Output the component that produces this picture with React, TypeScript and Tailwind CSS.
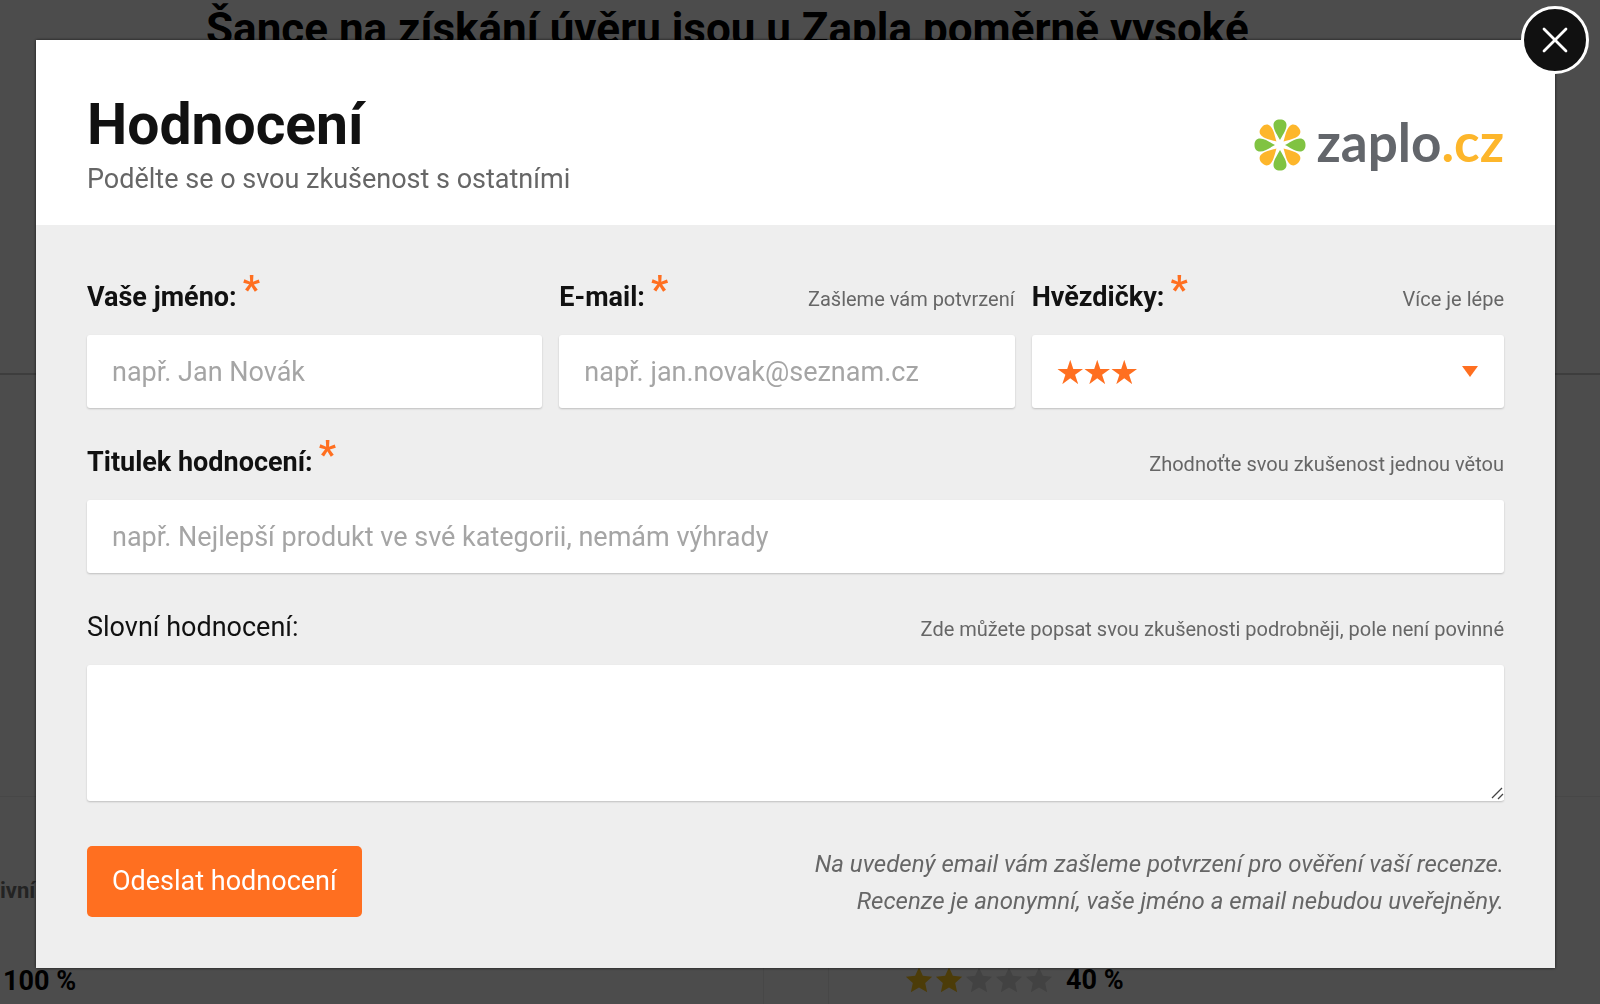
import type { ReactNode } from "react";
import { X } from "lucide-react";

const petals = [0, 45, 90, 135, 180, 225, 270, 315];

const starPath = "M12 1l3.3 7.4 8 .8-6 5.4 1.7 7.9-7-4.1-7 4.1 1.7-7.9-6-5.4 8-.8z";

const Logo = () => (
  <div className="flex items-center gap-[10px]">
    <svg viewBox="-27 -26 54 52" className="w-[54px] h-[52px]" aria-hidden="true">
      {petals.map((angle, i) => (
        <path
          key={angle}
          d="M0 -5 C-2 -9 -6.5 -15 -6.5 -20 C-6.5 -23.5 -4 -25.5 0 -25.5 C4 -25.5 6.5 -23.5 6.5 -20 C6.5 -15 2 -9 0 -5 Z"
          fill={i % 2 === 0 ? "#80c342" : "#fdb62b"}
          transform={`rotate(${angle})`}
        />
      ))}
    </svg>
    <span className="pb-[6px] font-['Lato',sans-serif] font-bold text-[53px] leading-[60px] text-[#63666b]">
      zaplo<span className="text-[#fdb62b]">.cz</span>
    </span>
  </div>
);

type FieldProps = {
  id: string;
  label: string;
  hint?: string;
  required?: boolean;
  className?: string;
  children: ReactNode;
};

const Field = ({ id, label, hint, required, className = "", children }: FieldProps) => (
  <div className={`mb-[33px] ${className}`}>
    <div className="flex items-baseline justify-between h-10 mb-[18px] pt-px leading-10 whitespace-nowrap box-content">
      <label htmlFor={id} className={`text-[27px] ${required ? "font-bold" : ""}`}>
        {label}
        {required && <span className="ml-[6px] text-[38px] leading-[0] align-[3px] text-[#ff6f20]">*</span>}
      </label>
      {hint && <span className="text-[20px] text-[#666]">{hint}</span>}
    </div>
    {children}
  </div>
);

const inputClass =
  "block w-full h-[73px] px-[25px] rounded-[3px] bg-white text-[27px] placeholder:text-[#a5a5a5] shadow-[0_1px_2px_rgba(0,0,0,0.2)] outline-none";

const Rating = ({ value }: { value: number }) => (
  <div className="flex gap-[2px]">
    {[1, 2, 3, 4, 5].map((n) => (
      <svg key={n} viewBox="0 0 24 24" className={`size-7 ${n <= value ? "text-[#ffc820]" : "text-[#ddd]"}`}>
        <path d={starPath} fill="currentColor" />
      </svg>
    ))}
  </div>
);

/* Review page under the dialog */
const ReviewPage = () => (
  <div className="h-screen flex flex-col overflow-hidden bg-white text-black" aria-hidden="true">
    <div className="h-[375px] shrink-0 pt-1 pl-[206px] border-b-2 border-[#ccc]">
      <h2 className="text-[44px] leading-[50px] font-bold whitespace-nowrap">
        Šance na získání úvěru jsou u Zapla poměrně vysoké
      </h2>
    </div>
    <div className="h-[422px] shrink-0 border-b border-[#eee]" />
    <div className="grow grid grid-cols-[764px_1fr]">
      <div className="border-r border-[#eee] pt-[78px]">
        <p className="text-[22px] leading-8 font-bold text-[#777]">ivní</p>
        <p className="mt-[58px] pl-[3px] text-[27px] leading-8 font-bold">100 %</p>
      </div>
      <div className="ml-16 border-l border-[#eee] pt-[167px] pl-[76px]">
        <div className="flex items-center gap-[13px]">
          <Rating value={2} />
          <span className="text-[27px] leading-8 font-bold">40 %</span>
        </div>
      </div>
    </div>
  </div>
);

const ReviewDialog = () => (
  <div className="fixed inset-0 bg-black/70 pt-10 pl-9 pr-[45px]">
    <div
      role="dialog"
      aria-labelledby="dialog-title"
      className="relative bg-[#eee] shadow-[0_0_3px_rgba(0,0,0,0.7)]"
    >
      <button
        type="button"
        aria-label="Zavřít"
        className="absolute -top-[34px] -right-[34px] size-[68px] rounded-full border-[3px] border-white bg-[#111] text-white flex items-center justify-center"
      >
        <X size={44} strokeWidth={1.5} />
      </button>

      <header className="flex items-center justify-between bg-white px-[51px] pt-[50px] pb-[26px]">
        <div>
          <h1 id="dialog-title" className="text-[57px] leading-[70px] font-bold text-[#111]">
            Hodnocení
          </h1>
          <p className="text-[27px] leading-[39px] text-[#666]">Podělte se o svou zkušenost s ostatními</p>
        </div>
        <Logo />
      </header>

      <form className="px-[51px] pt-[51px] pb-12 text-[#111]">
        <div className="grid grid-cols-3">
          <Field id="name" label="Vaše jméno:" required className="pr-[17px]">
            <input id="name" type="text" placeholder="např. Jan Novák" className={inputClass} />
          </Field>
          <Field id="email" label="E-mail:" hint="Zašleme vám potvrzení" required className="pr-[17px]">
            <input id="email" type="email" placeholder="např. jan.novak@seznam.cz" className={inputClass} />
          </Field>
          <Field id="stars" label="Hvězdičky:" hint="Více je lépe" required>
            <div className="relative">
              <select
                id="stars"
                defaultValue="3"
                className="block w-full h-[73px] px-[25px] rounded-[3px] bg-white font-['Noto_Sans_CJK_JP',sans-serif] text-[27px] text-[#ff6f20] shadow-[0_1px_2px_rgba(0,0,0,0.2)] outline-none appearance-none"
              >
                <option value="5">★★★★★</option>
                <option value="4">★★★★</option>
                <option value="3">★★★</option>
                <option value="2">★★</option>
                <option value="1">★</option>
              </select>
              <svg
                viewBox="0 0 16 11"
                className="absolute right-[26px] top-[31px] w-4 h-[11px] pointer-events-none"
                aria-hidden="true"
              >
                <path d="M0 0h16l-8 11z" fill="#ff6f20" />
              </svg>
            </div>
          </Field>
        </div>

        <Field id="title" label="Titulek hodnocení:" hint="Zhodnoťte svou zkušenost jednou větou" required>
          <input
            id="title"
            type="text"
            placeholder="např. Nejlepší produkt ve své kategorii, nemám výhrady"
            className={inputClass}
          />
        </Field>

        <Field
          id="review"
          label="Slovní hodnocení:"
          hint="Zde můžete popsat svou zkušenosti podrobněji, pole není povinné"
        >
          <div className="relative">
            <textarea
              id="review"
              className="block w-full h-[136px] px-[25px] py-4 rounded-[3px] bg-white text-[27px] shadow-[0_1px_2px_rgba(0,0,0,0.2)] outline-none resize-y"
            />
            <svg
              viewBox="0 0 14 14"
              className="absolute bottom-px right-0 size-[14px] bg-white pointer-events-none"
              aria-hidden="true"
            >
              <path d="M2 12L12 2M8 13L13 8" stroke="#444" strokeWidth="1.3" />
            </svg>
          </div>
        </Field>

        <div className="flex items-start justify-between pt-3">
          <button type="submit" className="h-[71px] px-[25px] rounded-[5px] bg-[#ff6f20] text-[27px] text-white">
            Odeslat hodnocení
          </button>
          <p className="text-right text-[24px] leading-[37px] italic text-[#666]">
            Na uvedený email vám zašleme potvrzení pro ověření vaší recenze.
            <br />
            Recenze je anonymní, vaše jméno a email nebudou uveřejněny.
          </p>
        </div>
      </form>
    </div>
  </div>
);

const App = () => {
  return (
    <main className="font-['Roboto',sans-serif]">
      <ReviewPage />
      <ReviewDialog />
    </main>
  );
};

export default App;
